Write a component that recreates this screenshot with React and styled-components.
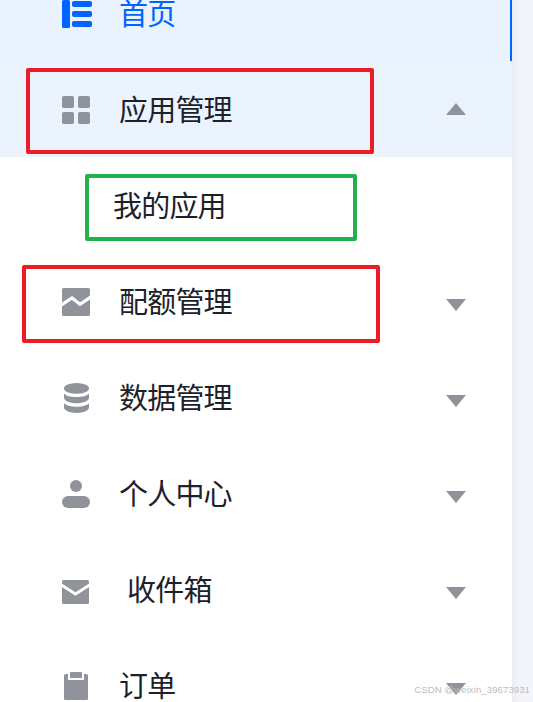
import React from "react";
import styled, { createGlobalStyle } from "styled-components";

const GlobalStyle = createGlobalStyle`
  * { box-sizing: border-box; }
  html, body { margin: 0; padding: 0; overflow: hidden; }
  body { font-family: "Noto Sans CJK SC", sans-serif; }
`;

const Page = styled.div`
  position: relative;
  display: flex;
  width: 533px;
  height: 702px;
  overflow: hidden;
  background: #f3f5fa;
`;

const Sidebar = styled.nav`
  display: flex;
  flex-direction: column;
  width: 512px;
  height: 768px;
  flex: none;
  margin-top: -35px;
  background: #fff;
  box-shadow: 0 0 12px rgba(0, 21, 41, 0.06);
`;

const Item = styled.div`
  display: flex;
  align-items: center;
  flex: none;
  height: 96px;
  padding: 0 46px 0 60px;
  background: ${(p) => (p.$active ? "#eaf2fe" : p.$open ? "#ebf3ff" : "#fff")};
  color: ${(p) => (p.$active ? "#0064ff" : "#909399")};
  box-shadow: ${(p) => (p.$active ? "inset -2px 0 #0064ff" : "none")};
`;

const SubItem = styled(Item)`
  padding-left: 113px;
`;

const Icon = styled.svg`
  display: block;
  flex: none;
  width: 32px;
  height: 32px;
  margin: 2px 27px 0 0;
  fill: currentColor;
`;

const Label = styled.span`
  flex: 1;
  margin-bottom: 2px;
  padding-left: ${(p) => (p.$indent ? "8px" : 0)};
  font-size: 29px;
  line-height: 26px;
  letter-spacing: -0.8px;
  white-space: nowrap;
  color: ${(p) => (p.$active ? "#0064ff" : "#1d2129")};
`;

const Caret = styled.span`
  width: 20px;
  height: 12px;
  margin-top: ${(p) => (p.$up ? "0" : "8px")};
  background: #909399;
  clip-path: ${(p) =>
    p.$up ? "polygon(50% 0, 100% 100%, 0 100%)" : "polygon(0 0, 100% 0, 50% 100%)"};
`;

const Marker = styled.div`
  position: absolute;
  left: ${(p) => p.$x}px;
  top: ${(p) => p.$y}px;
  width: ${(p) => p.$w}px;
  height: ${(p) => p.$h}px;
  border: 4px solid ${(p) => p.$color};
  border-radius: 2px;
`;

const Watermark = styled.div`
  position: absolute;
  right: 3px;
  bottom: 6px;
  font: 9.5px/12px "Liberation Sans", sans-serif;
  letter-spacing: 0.12px;
  color: #bcbcbe;
  white-space: nowrap;
`;

const icons = {
  home: (
    <>
      <rect x="2" y="2" width="8" height="28" rx="1.5" />
      <rect x="12" y="3" width="20" height="6" rx="2" />
      <rect x="12" y="13" width="20" height="6" rx="2" />
      <rect x="12" y="23" width="20" height="6" rx="2" />
    </>
  ),
  apps: (
    <>
      <rect x="2" y="2" width="12" height="12" rx="1.8" />
      <rect x="18" y="2" width="12" height="12" rx="1.8" />
      <rect x="2" y="18" width="12" height="12" rx="1.8" />
      <rect x="18" y="18" width="12" height="12" rx="1.8" />
    </>
  ),
  quota: (
    <>
      <rect x="2" y="2" width="28" height="28" rx="1.5" />
      <path d="M1 19.200 12 12l8 6.300 11-7.400" fill="none" stroke="#fff" strokeWidth="3.2" />
    </>
  ),
  data: (
    <>
      <ellipse cx="16.5" cy="6.4" rx="12.5" ry="5.4" />
      <path d="M4 11.400c2 2.300 6.500 3.600 12.500 3.600S27 13.700 29 11.400v4.400c0 3-5.500 5.500-12.500 5.500S4 18.800 4 15.800z" />
      <path d="M4 21.200c2 2.300 6.500 3.500 12.500 3.500S27 23.500 29 21.200v4.400c0 3-5.500 5.400-12.500 5.400S4 28.600 4 25.600z" />
    </>
  ),
  user: (
    <>
      <circle cx="16" cy="8" r="6" />
      <rect x="2" y="18" width="28" height="12" rx="6" />
    </>
  ),
  mail: (
    <>
      <rect x="2" y="6" width="27" height="24" rx="1.5" />
      <path d="M1 10.700 15.500 20 30 10.700" fill="none" stroke="#fff" strokeWidth="2.8" />
    </>
  ),
  order: (
    <>
      <path d="M5.500 4H8v6h16V4h2.500Q28 4 28 5.500v23q0 1.500-1.500 1.500h-21Q4 30 4 28.500v-23Q4 4 5.500 4z" />
      <rect x="10" y="2" width="12" height="6" rx="0.8" />
    </>
  ),
};

const items = [
  { icon: "home", label: "首页", active: true },
  { icon: "apps", label: "应用管理", open: true, children: ["我的应用"] },
  { icon: "quota", label: "配额管理" },
  { icon: "data", label: "数据管理" },
  { icon: "user", label: "个人中心" },
  { icon: "mail", label: "收件箱", indent: true },
  { icon: "order", label: "订单" },
];

const markers = [
  { x: 26, y: 68, w: 348, h: 86, color: "#ed1c24" },
  { x: 85, y: 174, w: 272, h: 67, color: "#22b14c" },
  { x: 22, y: 265, w: 358, h: 78, color: "#ed1c24" },
];

export default function App() {
  return (
    <>
      <GlobalStyle />
      <Page>
        <Sidebar>
          {items.map((item) => (
            <React.Fragment key={item.label}>
              <Item $active={item.active} $open={item.open}>
                <Icon viewBox="0 0 32 32">{icons[item.icon]}</Icon>
                <Label $active={item.active} $indent={item.indent}>
                  {item.label}
                </Label>
                {!item.active && <Caret $up={item.open} />}
              </Item>
              {item.children?.map((child) => (
                <SubItem key={child}>
                  <Label>{child}</Label>
                </SubItem>
              ))}
            </React.Fragment>
          ))}
        </Sidebar>
        {markers.map((m) => (
          <Marker key={m.y} $x={m.x} $y={m.y} $w={m.w} $h={m.h} $color={m.color} />
        ))}
        <Watermark>CSDN @weixin_39673931</Watermark>
      </Page>
    </>
  );
}
